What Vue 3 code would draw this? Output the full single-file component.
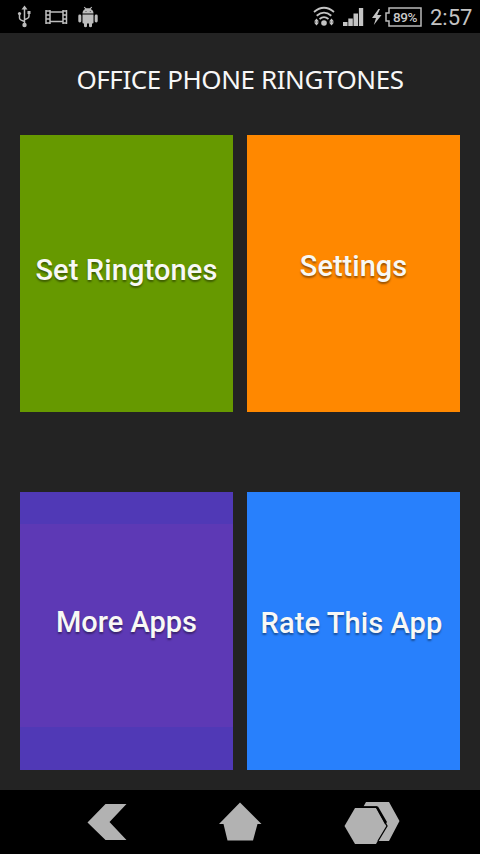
<script setup>
const tiles = [
  { label: 'Set Ringtones', name: 'ringtones' },
  { label: 'Settings', name: 'settings' },
  { label: 'More Apps', name: 'more' },
  { label: 'Rate This App', name: 'rate' },
]
</script>

<template>
  <div class="screen">
    <header class="status">
      <svg class="icons-left" width="120" height="33" viewBox="0 0 120 33">
        <g fill="none" stroke="#bdbdbd" stroke-width="1.5">
          <path d="M24.5 8V24M19.5 13V18Q19.5 20 24.5 21.500M29 11V16Q29 18.500 24.500 19.500" />
          <path d="M46 10V24M50 10V24M63 10V24M66.500 10V24M50 12H63M50 21.500H63M46 11H50M46 15H50M46 19H50M46 23H50M63 11H67M63 15H67M63 19H67M63 23H67" />
        </g>
        <g fill="#bdbdbd">
          <path d="M24.500 5.500L27.500 9.500H21.500Z" />
          <circle cx="24.500" cy="25" r="2.200" />
          <circle cx="19.500" cy="13.500" r="1.600" />
          <rect x="27.500" y="11" width="3" height="3" />
          <path d="M82.500 13.500C82.500 11 84 9.600 85.300 9L83.800 7.300L84.400 6.800L86.300 8.200H89.700L91.600 6.800L92.200 7.300L90.700 9C92.200 9.700 93.500 11 93.500 13.500Z" />
          <path d="M82.500 14.500H93.500V22.500Q93.500 23.500 92.500 23.500H92V26.500Q90.400 28 89 26.500V23.500H87V26.500Q85.600 28 84 26.500V23.500H83.500Q82.500 23.500 82.500 22.500Z" />
          <rect x="78.300" y="14.500" width="3" height="8" rx="1.400" />
          <rect x="94.700" y="14.500" width="3" height="8" rx="1.400" />
        </g>
        <path d="M85.500 11.500h1M89.800 11.500h1" stroke="#555" />
      </svg>
      <div class="status-right">
        <svg width="86" height="33" viewBox="300 0 86 33">
          <g fill="none" stroke="#c4c4c4" stroke-width="1.800">
            <path d="M314 12Q324 3.500 334 12M316.700 15.700Q324 9.500 331.300 15.700M319.500 19Q324 15.300 328.500 19" />
          </g>
          <g fill="#c4c4c4">
            <circle cx="324" cy="23" r="2.800" />
            <path d="M316.500 18.500L319 21.500H317.500V22.500H319L316.500 25.500L314 22.500H315.500V21.500H314ZM331.500 18.500L334 21.500H332.500V22.500H334L331.500 25.500L329 22.500H330.500V21.500H329Z" />
            <path d="M343 22h4.500v4h-4.500zM348.300 18.500h4.500v7.500h-4.500zM353.500 13.500h4.500V26h-4.500zM358.900 8h4.300v18h-4.300z" />
            <path d="M378.500 9L372 18H376L373.800 25L381.500 15H377.200L380 9Z" />
          </g>
        </svg>
        <div class="battery">
          <svg width="38" height="20" viewBox="0 0 38 20">
            <path d="M4 1H36V19H4V14H1V6H4Z" fill="none" stroke="#b9b9b9" stroke-width="1.500" />
          </svg>
          <span class="percent">89%</span>
        </div>
        <span class="clock">2:57</span>
      </div>
    </header>
    <main class="content">
      <h1><span>OFFICE PHONE RINGTONES</span></h1>
      <div class="tiles">
        <div v-for="tile in tiles" :key="tile.name" class="tile" :class="tile.name">
          <span>{{ tile.label }}</span>
        </div>
      </div>
    </main>
    <nav class="navbar">
      <svg width="480" height="64" viewBox="0 790 480 64">
        <g fill="#b2b2b2">
          <path d="M105.500 804H126.500L109.500 822L126.500 840H105.500L87.500 822.500Z" />
          <path d="M240 802.500L261.500 824H257.500L253 840.500H227.500L223.500 824H219Z" />
          <path d="M366 802H389L399.500 821L389 841H374L387 822L378 806.500H363.500Z" />
          <path d="M355 808H376L386 826L376 844H355L344.500 826Z" />
        </g>
        <path d="M363 807H376.500L387 826L378 841" fill="none" stroke="#000" stroke-width="1.300" />
      </svg>
    </nav>
  </div>
</template>

<style>
body {
  background: #000;
}
</style>

<style scoped>
.screen {
  width: 480px;
  height: 854px;
  display: flex;
  flex-direction: column;
  overflow: hidden;
  background: #232323;
  font-family: Roboto, sans-serif;
}
.status {
  height: 33px;
  display: flex;
  justify-content: space-between;
  background: #000;
}
.status-right {
  display: flex;
  width: 180px;
}
svg {
  display: block;
  flex: none;
}
.battery {
  display: grid;
  width: 38px;
  height: 20px;
  margin-top: 7px;
  margin-left: -1px;
}
.battery > * {
  grid-area: 1 / 1;
}
.percent {
  padding-left: 2px;
  text-align: center;
  font-size: 13.5px;
  font-weight: 500;
  letter-spacing: -0.4px;
  line-height: 20px;
  color: #c9c9c9;
}
.clock {
  margin-left: 7px;
  font-size: 22px;
  line-height: 35px;
  color: #c4c4c4;
}
.content {
  flex: 1;
}
h1 {
  margin: 0;
  height: 102px;
  text-align: center;
  font: 400 26px/93px "Noto Sans", sans-serif;
  letter-spacing: -0.42px;
  color: #f7f7f7;
  white-space: nowrap;
}
.tiles {
  display: grid;
  grid-template-columns: 213px 213px;
  grid-template-rows: 277px 278px;
  gap: 80px 14px;
  padding: 0 20px;
}
.tile {
  box-sizing: border-box;
  display: flex;
  align-items: center;
  justify-content: center;
  font-size: 29px;
  font-weight: 500;
  color: #f8f8f5;
  white-space: nowrap;
  text-shadow: 0 1.5px 2px rgba(0, 0, 0, 0.4);
}
.ringtones {
  background: #669900;
  padding-bottom: 8px;
  letter-spacing: 0.12px;
}
.settings {
  background: #ff8800;
  padding-bottom: 16px;
}
.more {
  background: linear-gradient(#5039b6 0 32px, #5d39b5 32px 235px, #5039b6 235px);
  padding-bottom: 18px;
}
.rate {
  background: #2880fc;
  padding-right: 4px;
  padding-bottom: 16px;
  letter-spacing: 0.1px;
}
.navbar {
  height: 64px;
  background: #000;
}
</style>
